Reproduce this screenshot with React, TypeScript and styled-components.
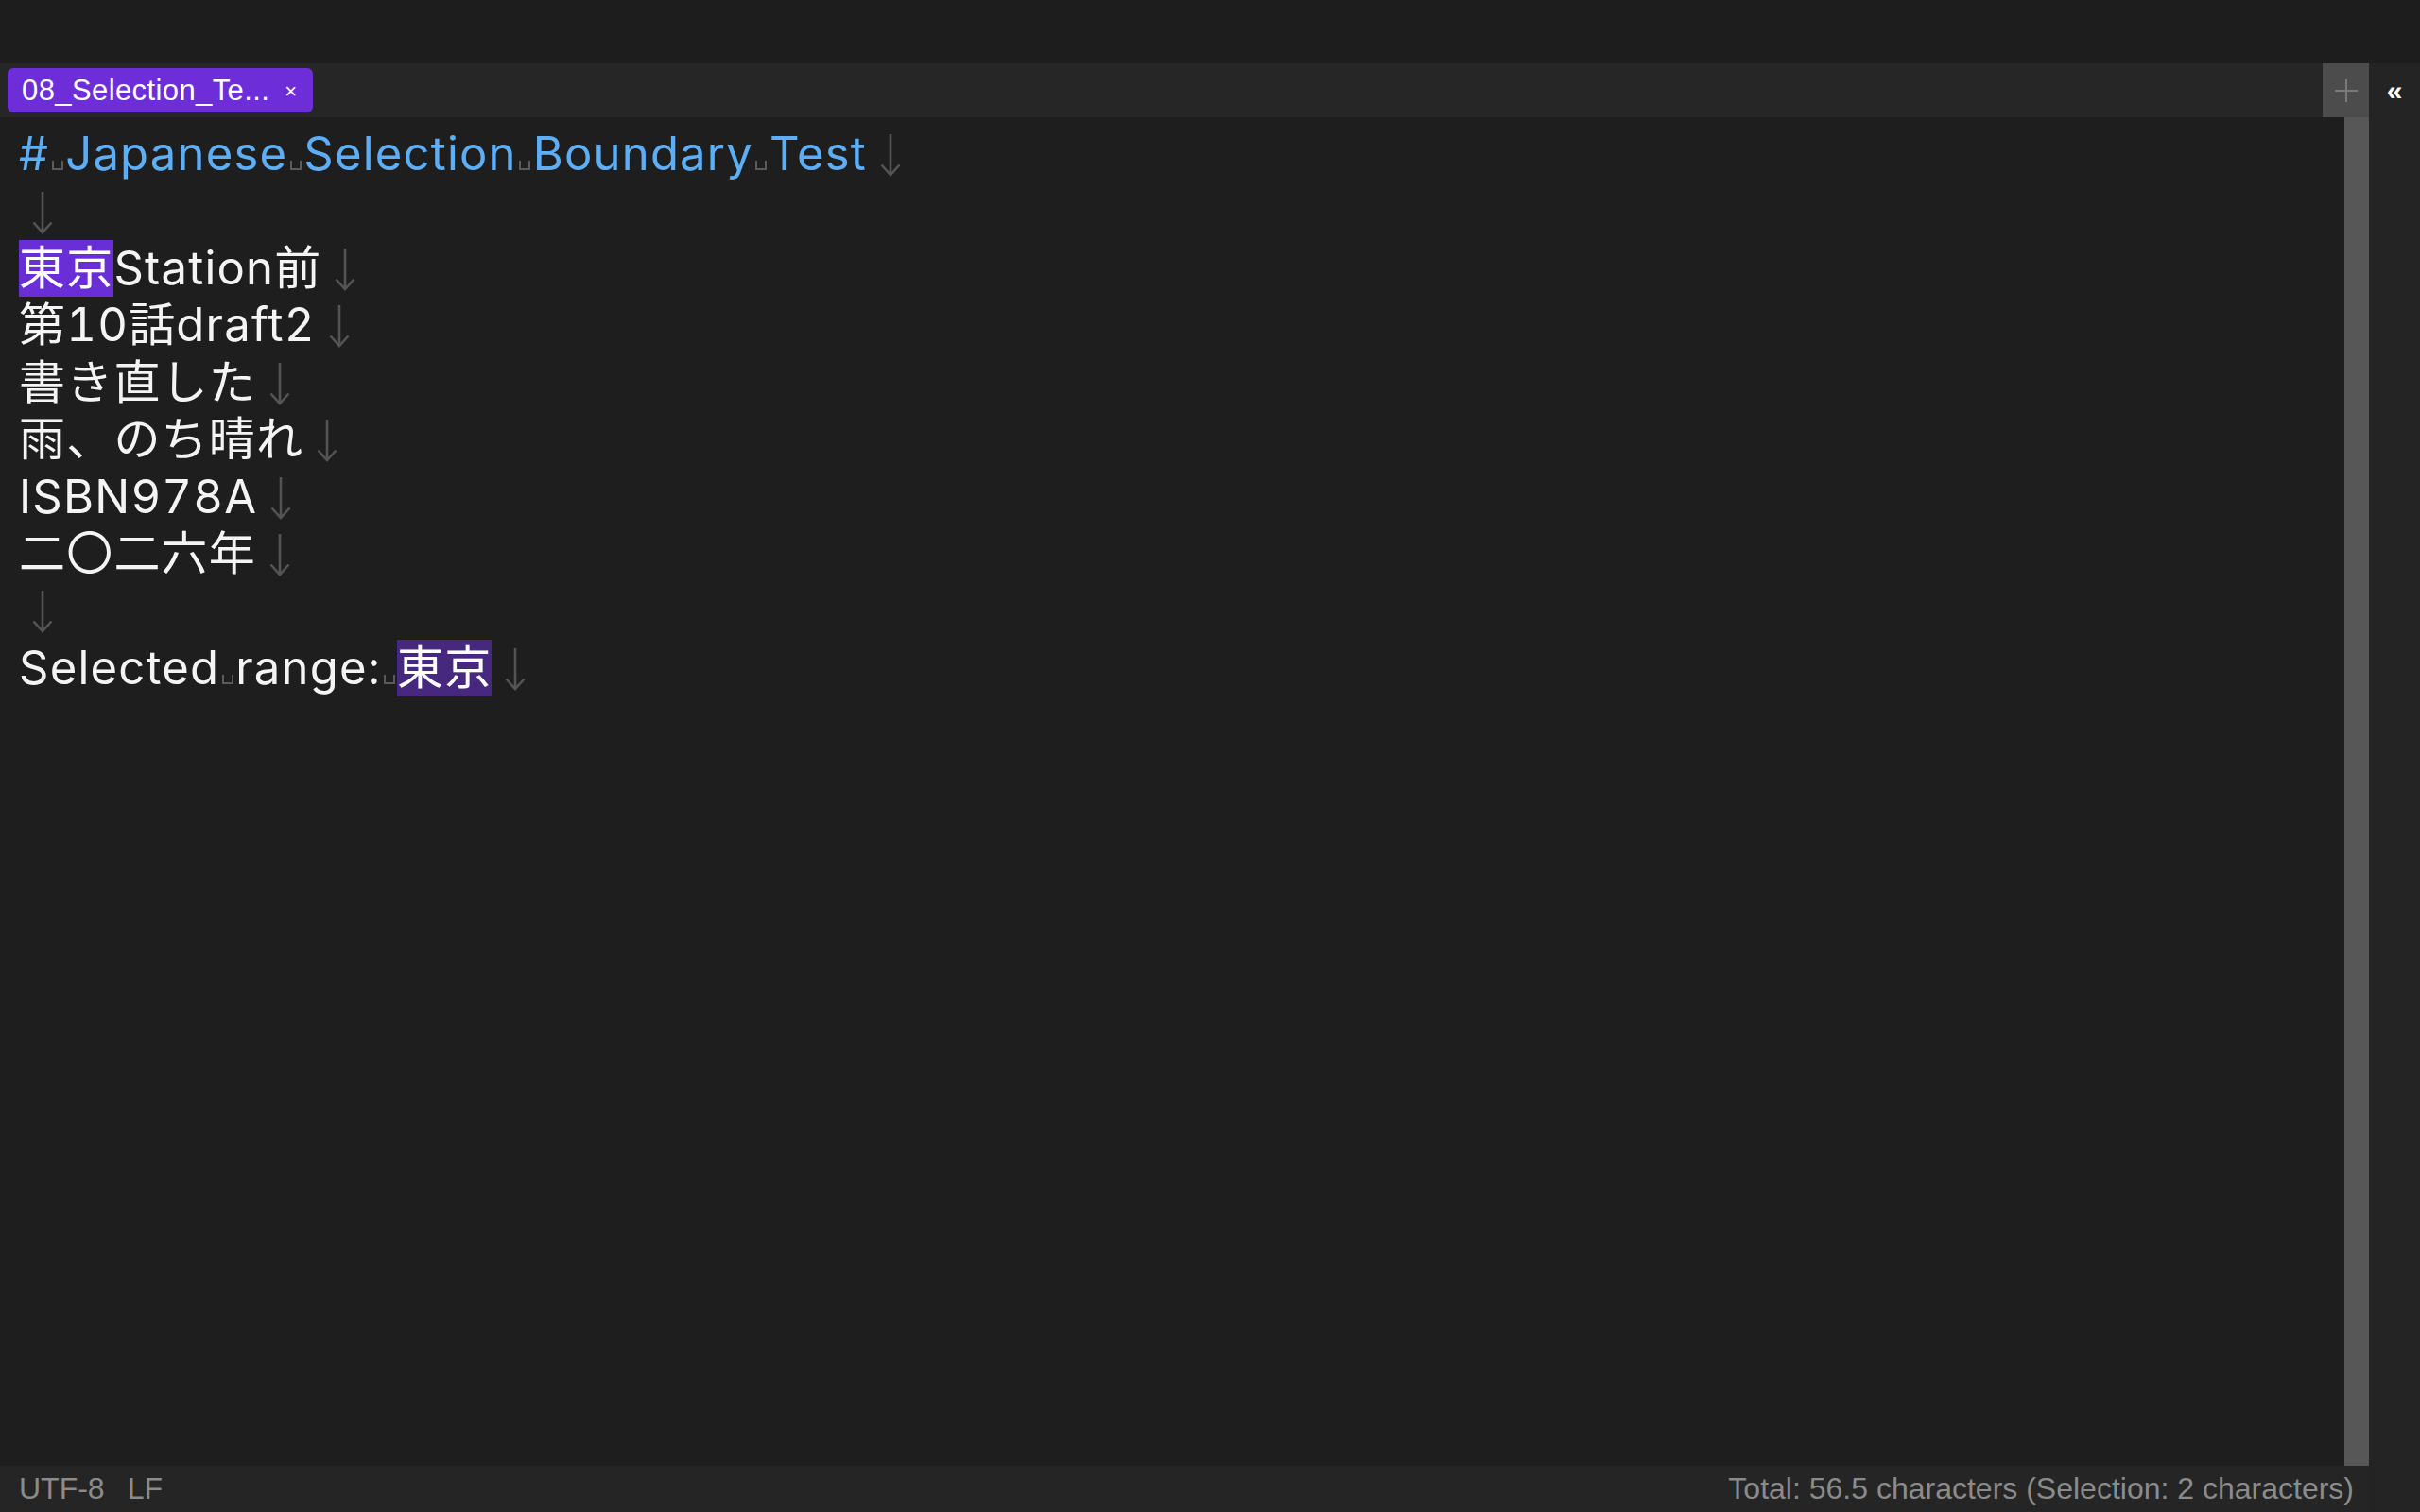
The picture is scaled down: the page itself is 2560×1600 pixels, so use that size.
import React from 'react';
import styled, { createGlobalStyle } from 'styled-components';

type Token =
  | { kind: 'text'; value: string }
  | { kind: 'space' }
  | { kind: 'select'; value: string; tone: 'active' | 'muted' };

type EditorLine = {
  heading?: boolean;
  tokens: Token[];
};

// splits a plain string into words + visible space markers
const words = (s: string): Token[] =>
  s.split(' ').flatMap((w, i): Token[] => {
    const parts: Token[] = i === 0 ? [] : [{ kind: 'space' }];
    if (w) parts.push({ kind: 'text', value: w });
    return parts;
  });

const lines: EditorLine[] = [
  { heading: true, tokens: words('# Japanese Selection Boundary Test') },
  { tokens: [] },
  {
    tokens: [
      { kind: 'select', value: '東京', tone: 'active' },
      { kind: 'text', value: 'Station前' },
    ],
  },
  { tokens: words('第10話draft2') },
  { tokens: words('書き直した') },
  { tokens: words('雨、のち晴れ') },
  { tokens: words('ISBN978A') },
  { tokens: words('二〇二六年') },
  { tokens: [] },
  {
    tokens: [
      ...words('Selected range: '),
      { kind: 'select', value: '東京', tone: 'muted' },
    ],
  },
];

const GlobalStyle = createGlobalStyle`
  html, body {
    margin: 0;
    padding: 0;
    background: #1e1e1e;
  }
  * {
    box-sizing: border-box;
  }
`;

const Shell = styled.div`
  display: flex;
  flex-direction: column;
  height: 100vh;
  background: #1e1e1e;
  font-family: 'Liberation Sans', 'Noto Sans CJK JP', sans-serif;
`;

const TopBar = styled.div`
  height: 67px;
  flex-shrink: 0;
  background: #1d1d1d;
`;

const Workspace = styled.div`
  flex: 1;
  display: flex;
  min-height: 0;
`;

const MainColumn = styled.div`
  flex: 1;
  display: flex;
  flex-direction: column;
  min-width: 0;
`;

const TabBar = styled.div`
  height: 57px;
  flex-shrink: 0;
  display: flex;
  align-items: center;
  background: #262626;
`;

const Tab = styled.div`
  display: flex;
  align-items: center;
  gap: 16px;
  height: 47px;
  margin-left: 8px;
  padding: 0 16px 0 15px;
  border-radius: 6px;
  background: #6d2ed9;
  color: #ffffff;
  font-size: 31px;
  letter-spacing: 0.4px;
`;

const TabClose = styled.span`
  font-size: 22px;
  line-height: 1;
  margin-top: 2px;
`;

const Spacer = styled.div`
  flex: 1;
`;

const PlusButton = styled.div`
  width: 49px;
  height: 100%;
  display: flex;
  align-items: center;
  justify-content: center;
  background: #4c4c4c;
`;

const EditorRow = styled.div`
  flex: 1;
  display: flex;
  min-height: 0;
`;

const Editor = styled.div`
  flex: 1;
  padding: 9px 0 0 20px;
  font-family: Inter, 'Noto Sans CJK JP', sans-serif;
  font-size: 49px;
  font-feature-settings: 'tnum' 1;
  letter-spacing: 1.2px;
  color: #f4f4f4;
`;

const Line = styled.div<{ $heading?: boolean }>`
  display: flex;
  align-items: center;
  height: 60.4px;
  line-height: 60px;
  white-space: pre;
  color: ${(p) => (p.$heading ? '#5eaef6' : '#f4f4f4')};
`;

const Word = styled.span`
  line-height: 60px;
`;

const Selection = styled.span<{ $tone: 'active' | 'muted' }>`
  display: inline-block;
  height: 60px;
  line-height: 60px;
  color: #ffffff;
  background: ${(p) => (p.$tone === 'active' ? '#6a2ed7' : '#46287f')};
`;

const SpaceMark = styled.span`
  display: inline-flex;
  justify-content: center;
  align-items: flex-start;
  width: 17px;
  height: 60px;
  padding-top: 37px;
`;

const ArrowSvg = styled.svg`
  flex-shrink: 0;
  margin-left: 14px;
  margin-top: 2px;
`;

const Scrollbar = styled.div`
  width: 26px;
  flex-shrink: 0;
  background: #575757;
`;

const StatusBar = styled.div`
  height: 49px;
  flex-shrink: 0;
  display: flex;
  align-items: center;
  justify-content: space-between;
  padding: 0 16px 0 20px;
  background: #252525;
  color: #8b8b8b;
  font-size: 32px;
`;

const StatusGroup = styled.div`
  display: flex;
  gap: 24px;
`;

const SidePanel = styled.div`
  width: 54px;
  flex-shrink: 0;
  background: #242424;
`;

const CollapseButton = styled.div`
  height: 57px;
  display: flex;
  align-items: center;
  justify-content: center;
  color: #ffffff;
  font-size: 30px;
  font-weight: 700;
`;

const NewlineMark = () => (
  <ArrowSvg width={22} height={46} viewBox="0 0 22 46">
    <path
      d="M11 1 V44 M1.5 33.5 L11 44 L20.5 33.5"
      fill="none"
      stroke="#545454"
      strokeWidth={2.6}
    />
  </ArrowSvg>
);

const SpaceGlyph = () => (
  <SpaceMark>
    <svg width={12} height={10} viewBox="0 0 12 10">
      <path d="M1 0 V9 H11 V0" fill="none" stroke="#5a5a5a" strokeWidth={2} />
    </svg>
  </SpaceMark>
);

const renderToken = (token: Token, i: number) => {
  if (token.kind === 'space') return <SpaceGlyph key={i} />;
  if (token.kind === 'select')
    return (
      <Selection key={i} $tone={token.tone}>
        {token.value}
      </Selection>
    );
  return <Word key={i}>{token.value}</Word>;
};

export default function App() {
  return (
    <>
      <GlobalStyle />
      <Shell>
        <TopBar />
        <Workspace>
          <MainColumn>
            <TabBar>
              <Tab>
                <span>08_Selection_Te...</span>
                <TabClose>×</TabClose>
              </Tab>
              <Spacer />
              <PlusButton>
                <svg width={26} height={26} viewBox="0 0 26 26">
                  <path d="M13 1 V25 M1 13 H25" stroke="#7a7a7a" strokeWidth={2} />
                </svg>
              </PlusButton>
            </TabBar>
            <EditorRow>
              <Editor>
                {lines.map((line, i) => (
                  <Line key={i} $heading={line.heading}>
                    {line.tokens.map(renderToken)}
                    <NewlineMark />
                  </Line>
                ))}
              </Editor>
              <Scrollbar />
            </EditorRow>
            <StatusBar>
              <StatusGroup>
                <span>UTF-8</span>
                <span>LF</span>
              </StatusGroup>
              <span>Total: 56.5 characters (Selection: 2 characters)</span>
            </StatusBar>
          </MainColumn>
          <SidePanel>
            <CollapseButton>«</CollapseButton>
          </SidePanel>
        </Workspace>
      </Shell>
    </>
  );
}
